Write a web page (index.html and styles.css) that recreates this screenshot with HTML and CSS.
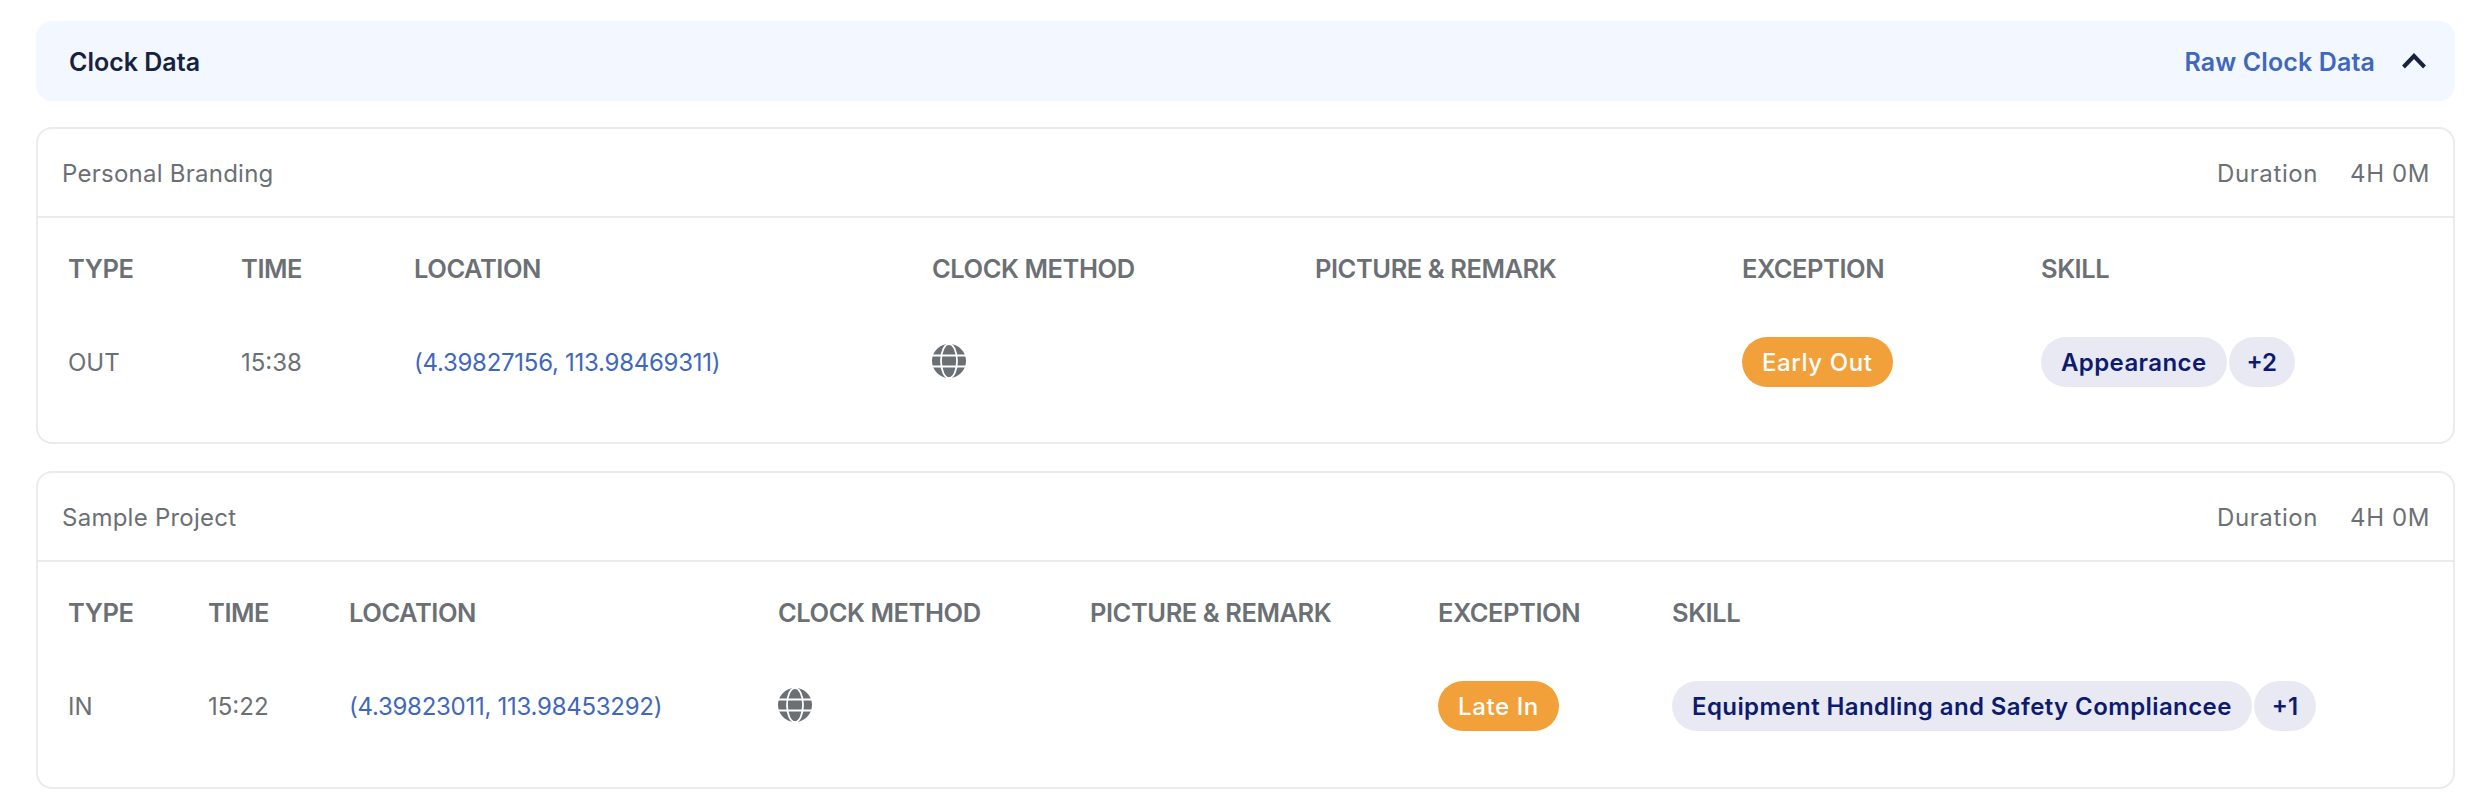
FILE: index.html
```html
<!DOCTYPE html>
<html lang="en">
<head>
<meta charset="utf-8">
<title>Clock Data</title>
<link rel="stylesheet" href="styles.css">
</head>
<body>
<main class="page">
  <header class="bar">
    <h2 class="bar-title">Clock Data</h2>
    <div class="bar-actions">
      <a class="raw-link">Raw Clock Data</a>
      <svg class="chevron" viewBox="0 0 26 16" aria-hidden="true"><path d="M2.5 14 13 3l10.5 11" fill="none" stroke="#16233f" stroke-width="4"/></svg>
    </div>
  </header>

  <section class="card">
    <div class="card-head">
      <span>Personal Branding</span>
      <div class="duration"><span>Duration</span><span>4H 0M</span></div>
    </div>
    <div class="grid grid-a">
      <div class="th">TYPE</div><div class="th">TIME</div><div class="th">LOCATION</div><div class="th">CLOCK METHOD</div><div class="th">PICTURE &amp; REMARK</div><div class="th">EXCEPTION</div><div class="th">SKILL</div>
      <div class="td">OUT</div>
      <div class="td">15:38</div>
      <div class="td"><a class="loc">(4.39827156, 113.98469311)</a></div>
      <div class="td"><svg class="globe" viewBox="0 0 34 34" aria-hidden="true"><circle cx="17" cy="17" r="17" fill="#6b7075"/><ellipse cx="17" cy="17" rx="8" ry="17" fill="none" stroke="#fff" stroke-width="1.8"/><path d="M0 11.5h34M0 22.5h34" stroke="#fff" stroke-width="1.8"/></svg></div>
      <div class="td"></div>
      <div class="td"><span class="pill pill-warn">Early Out</span></div>
      <div class="td"><div class="skills"><span class="pill pill-skill">Appearance</span><span class="pill pill-skill pill-count">+2</span></div></div>
    </div>
  </section>

  <section class="card">
    <div class="card-head">
      <span>Sample Project</span>
      <div class="duration"><span>Duration</span><span>4H 0M</span></div>
    </div>
    <div class="grid grid-b">
      <div class="th">TYPE</div><div class="th">TIME</div><div class="th">LOCATION</div><div class="th">CLOCK METHOD</div><div class="th">PICTURE &amp; REMARK</div><div class="th">EXCEPTION</div><div class="th">SKILL</div>
      <div class="td">IN</div>
      <div class="td">15:22</div>
      <div class="td"><a class="loc">(4.39823011, 113.98453292)</a></div>
      <div class="td"><svg class="globe" viewBox="0 0 34 34" aria-hidden="true"><circle cx="17" cy="17" r="17" fill="#6b7075"/><ellipse cx="17" cy="17" rx="8" ry="17" fill="none" stroke="#fff" stroke-width="1.8"/><path d="M0 11.5h34M0 22.5h34" stroke="#fff" stroke-width="1.8"/></svg></div>
      <div class="td"></div>
      <div class="td"><span class="pill pill-warn">Late In</span></div>
      <div class="td"><div class="skills"><span class="pill pill-skill">Equipment Handling and Safety Compliancee</span><span class="pill pill-skill pill-count">+1</span></div></div>
    </div>
  </section>
</main>
</body>
</html>
```
FILE: styles.css
```css
* { box-sizing: border-box; }
html, body { margin: 0; background: #fff; }
body {
  font-family: "Inter", "Liberation Sans", sans-serif;
  font-size: 24px;
  color: #6b7075;
}
.page {
  display: flex;
  flex-direction: column;
  padding: 21px 35px 0 36px;
}
.bar {
  height: 80px;
  display: flex;
  align-items: center;
  justify-content: space-between;
  padding: 2px 28px 0 33px;
  background: #f3f7ff;
  border-radius: 16px;
  margin-bottom: 26px;
}
.bar-title {
  margin: 0;
  font-size: 25px;
  font-weight: 600;
  color: #16233f;
}
.bar-actions { display: flex; align-items: center; gap: 26px; }
.raw-link { font-size: 25px; font-weight: 600; color: #3f67bd; letter-spacing: 0.12px; }
.chevron { width: 26px; height: 16px; display: block; margin-top: -2px; }
.card {
  border: 2px solid #ebebeb;
  border-radius: 16px;
  height: 317px;
  margin-bottom: 27px;
}
.card:last-child { height: 318px; margin-bottom: 0; }
.card-head {
  height: 89px;
  display: flex;
  align-items: center;
  justify-content: space-between;
  padding: 2px 23px 0 24px;
  border-bottom: 2px solid #ebebeb;
  letter-spacing: 0.25px;
}
.duration { display: flex; gap: 32px; letter-spacing: 0.6px; }
.grid {
  display: grid;
  padding-left: 30px;
  grid-template-rows: 95px 92px;
  padding-top: 3px;
}
.grid-a { grid-template-columns: 173px 173px 518px 383px 427px 299px 1fr; }
.grid-b { grid-template-columns: 140px 141px 429px 312px 348px 234px 1fr; }
.th { display: flex; align-items: center; font-size: 25.5px; font-weight: 600; letter-spacing: -0.45px; }
.td { display: flex; align-items: center; }
.loc { color: #3f67bd; letter-spacing: -0.27px; }
.globe { width: 34px; height: 34px; display: block; margin-top: -2px; }
.skills { display: flex; gap: 2px; }
.pill {
  height: 50px;
  display: inline-flex;
  align-items: center;
  padding: 0 20px;
  border-radius: 25px;
  white-space: nowrap;
}
.pill-warn { background: #f2a03a; color: #fff; font-weight: 500; letter-spacing: 0.6px; }
.pill-skill { background: #e8e9f3; color: #0d1b6e; font-weight: 600; letter-spacing: 0.4px; }
.pill-count { padding: 0 18px; letter-spacing: 0; }
```
